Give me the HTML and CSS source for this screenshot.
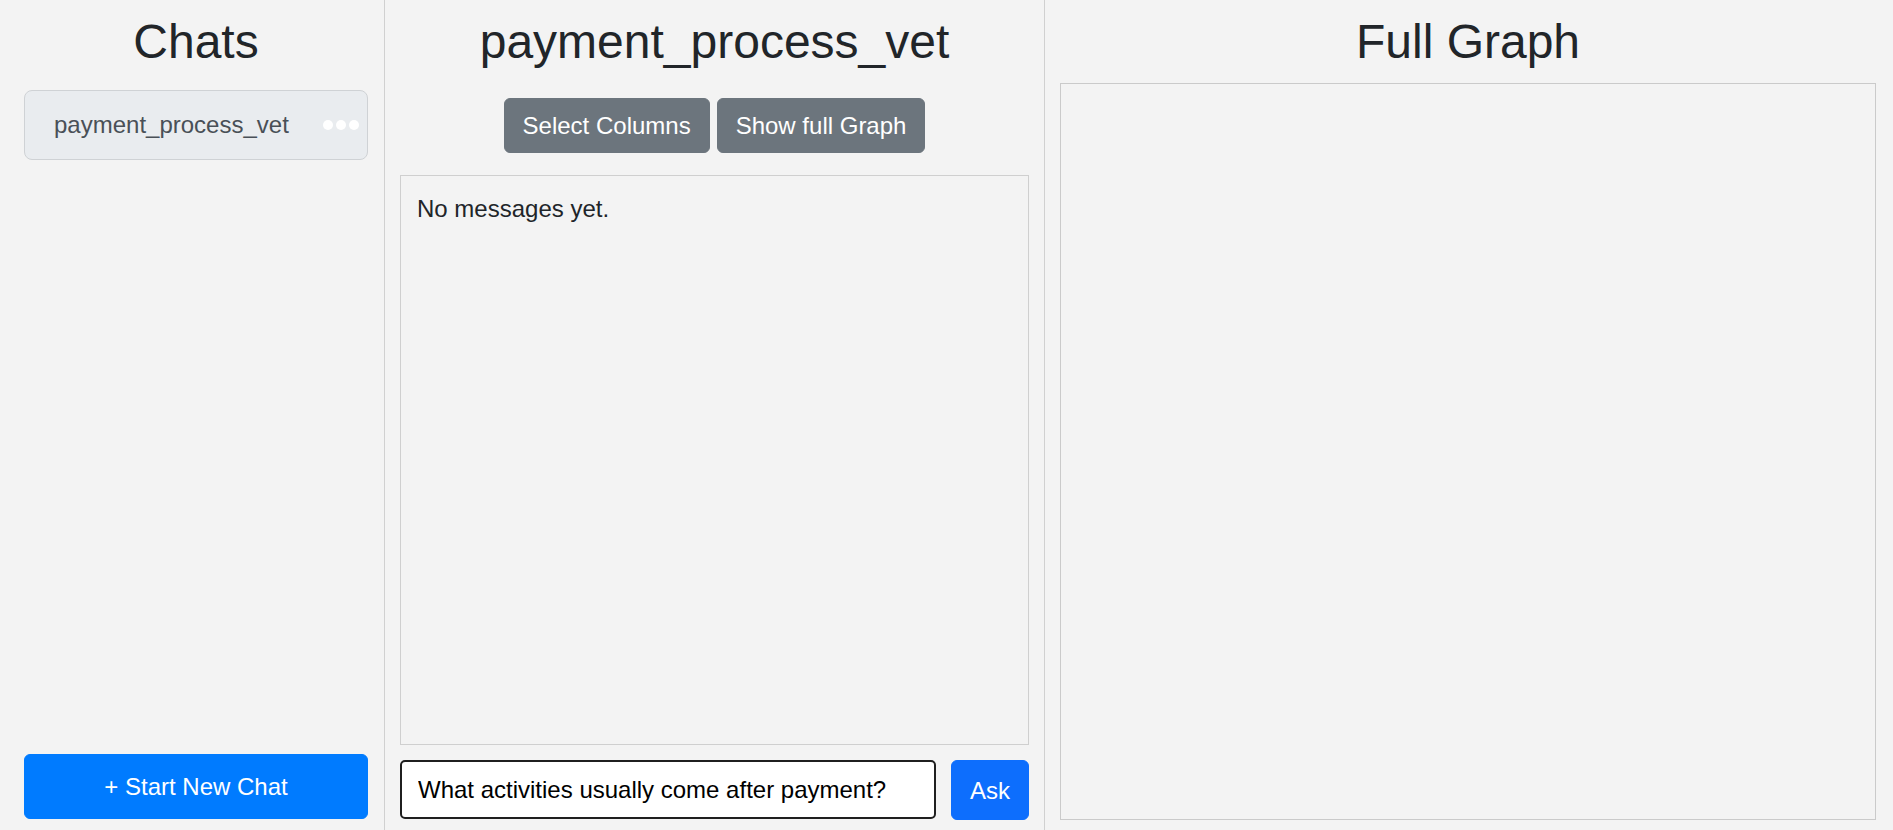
FILE: index.html
```html
<!DOCTYPE html>
<html lang="en">
<head>
<meta charset="utf-8">
<title>Chats</title>
<link rel="stylesheet" href="styles.css">
</head>
<body>
<div class="app">
  <aside class="sidebar">
    <h2 class="title">Chats</h2>
    <div class="chat-list">
      <div class="chat-item">
        <span class="chat-name">payment_process_vet</span>
        <span class="chat-menu"><span class="dot"></span><span class="dot"></span><span class="dot"></span></span>
      </div>
    </div>
    <button class="btn btn-new">+ Start New Chat</button>
  </aside>
  <main class="chat-panel">
    <h2 class="title">payment_process_vet</h2>
    <div class="toolbar">
      <button class="btn btn-secondary">Select Columns</button>
      <button class="btn btn-secondary">Show full Graph</button>
    </div>
    <div class="messages">
      <p class="empty">No messages yet.</p>
    </div>
    <form class="ask-row">
      <input class="ask-input" type="text" value="What activities usually come after payment?">
      <button class="btn btn-ask" type="button">Ask</button>
    </form>
  </main>
  <section class="graph-panel">
    <h2 class="title">Full Graph</h2>
    <div class="graph-box"></div>
  </section>
</div>
</body>
</html>
```

FILE: styles.css
```css
* { box-sizing: border-box; }

html, body {
  margin: 0;
  height: 100%;
}

body {
  background: #f3f3f3;
  font-family: "Liberation Sans", Arial, sans-serif;
  font-size: 24px;
  line-height: 1.5;
  color: #212529;
}

.app {
  display: flex;
  height: 830px;
}

.title {
  margin: 0;
  font-size: 48px;
  font-weight: 400;
  line-height: 57.6px;
  text-align: center;
  color: #212529;
}

.btn {
  font-family: inherit;
  font-size: 24px;
  line-height: 35px;
  border: 1px solid transparent;
  border-radius: 6px;
  color: #fff;
  cursor: pointer;
}

/* Sidebar */
.sidebar {
  width: 385px;
  flex: none;
  display: flex;
  flex-direction: column;
  padding: 13px 16px 11px 24px;
  border-right: 1px solid #d0d0d0;
}

.sidebar .title {
  margin-bottom: 19px;
}

.chat-list {
  flex: 1;
}

.chat-item {
  height: 70px;
  display: flex;
  align-items: center;
  justify-content: space-between;
  padding: 0 8px 0 29px;
  background: #e9ecef;
  border: 1px solid #cfd2d5;
  border-radius: 8px;
}

.chat-name {
  color: #495057;
}

.chat-menu {
  display: flex;
  gap: 3px;
}

.dot {
  width: 10px;
  height: 10px;
  border-radius: 50%;
  background: #fff;
}

.btn-new {
  height: 65px;
  width: 100%;
  background: #007bff;
  border-color: #007bff;
}

/* Chat panel */
.chat-panel {
  width: 660px;
  flex: none;
  display: flex;
  flex-direction: column;
  padding: 13px 15px 10px 15px;
  border-right: 1px solid #d0d0d0;
}

.chat-panel .title {
  margin-bottom: 27px;
}

.toolbar {
  display: flex;
  justify-content: center;
  gap: 7px;
  margin-bottom: 22px;
}

.btn-secondary {
  padding: 9px 18px;
  height: 55px;
  background: #6c757d;
  border-color: #6c757d;
}

.messages {
  flex: 1;
  border: 1px solid #cfcfcf;
  padding: 15px 16px;
}

.empty {
  margin: 0;
}

.ask-row {
  display: flex;
  gap: 15px;
  margin: 15px 0 0;
  height: 60px;
}

.ask-input {
  flex: 1;
  height: 59px;
  padding: 0 16px;
  font-family: inherit;
  font-size: 24px;
  color: #000;
  background: #fff;
  border: 2px solid #1f1f1f;
  border-radius: 5px;
  outline: none;
}

.btn-ask {
  width: 78px;
  height: 60px;
  padding: 0;
  background: #0d6efd;
  border-color: #0d6efd;
}

/* Graph panel */
.graph-panel {
  flex: 1;
  display: flex;
  flex-direction: column;
  padding: 13px 17px 10px 15px;
}

.graph-panel .title {
  margin-bottom: 12px;
}

.graph-box {
  flex: 1;
  border: 1px solid #cacaca;
}
```
